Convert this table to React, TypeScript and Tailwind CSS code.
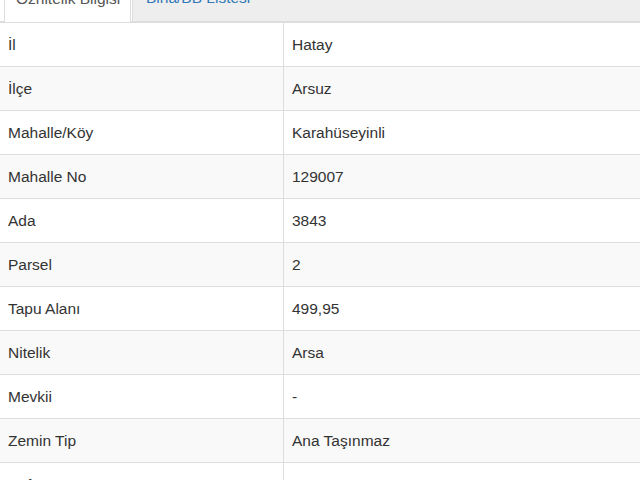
import React from "react";

const rows: [string, string][] = [
  ["İl", "Hatay"],
  ["İlçe", "Arsuz"],
  ["Mahalle/Köy", "Karahüseyinli"],
  ["Mahalle No", "129007"],
  ["Ada", "3843"],
  ["Parsel", "2"],
  ["Tapu Alanı", "499,95"],
  ["Nitelik", "Arsa"],
  ["Mevkii", "-"],
  ["Zemin Tip", "Ana Taşınmaz"],
  ["Pafta", "O36-D-08-C-1-C"],
];

export default function App() {
  return (
    <div
      className="w-[640px] h-[480px] overflow-hidden bg-white text-[#333333] text-[15.5px]"
      style={{ fontFamily: '"Liberation Sans", Arial, sans-serif' }}
    >
      <div className="flex h-[22px] items-end">
        <div className="w-[4px] h-full border-b border-[#dddddd]" />
        <div className="w-[127px] h-full flex items-end border-l border-r border-[#dddddd] bg-white pl-[11px] pb-[13px] leading-[20px] text-[#555555] whitespace-nowrap">
          Öznitelik Bilgisi
        </div>
        <div className="w-[1px] h-full border-b border-[#dddddd]" />
        <div className="flex-1 h-full flex items-end border-l border-b border-[#dddddd] bg-[#eeeeee] pl-[13px] pb-[13px] leading-[20px] text-[#337ab7] whitespace-nowrap">
          Bina/BB Listesi
        </div>
      </div>
      <div className="flex flex-col">
        {rows.map(([k, v], i) => (
          <div
            key={k}
            className={`flex h-[44px] border-t border-[#dddddd] ${i % 2 === 1 ? "bg-[#f9f9f9]" : "bg-white"}`}
          >
            <div className="w-[284px] border-r border-[#dddddd] flex items-center pl-[8px] whitespace-nowrap">
              {k}
            </div>
            <div className="flex-1 flex items-center pl-[8px] whitespace-nowrap">{v}</div>
          </div>
        ))}
      </div>
    </div>
  );
}
